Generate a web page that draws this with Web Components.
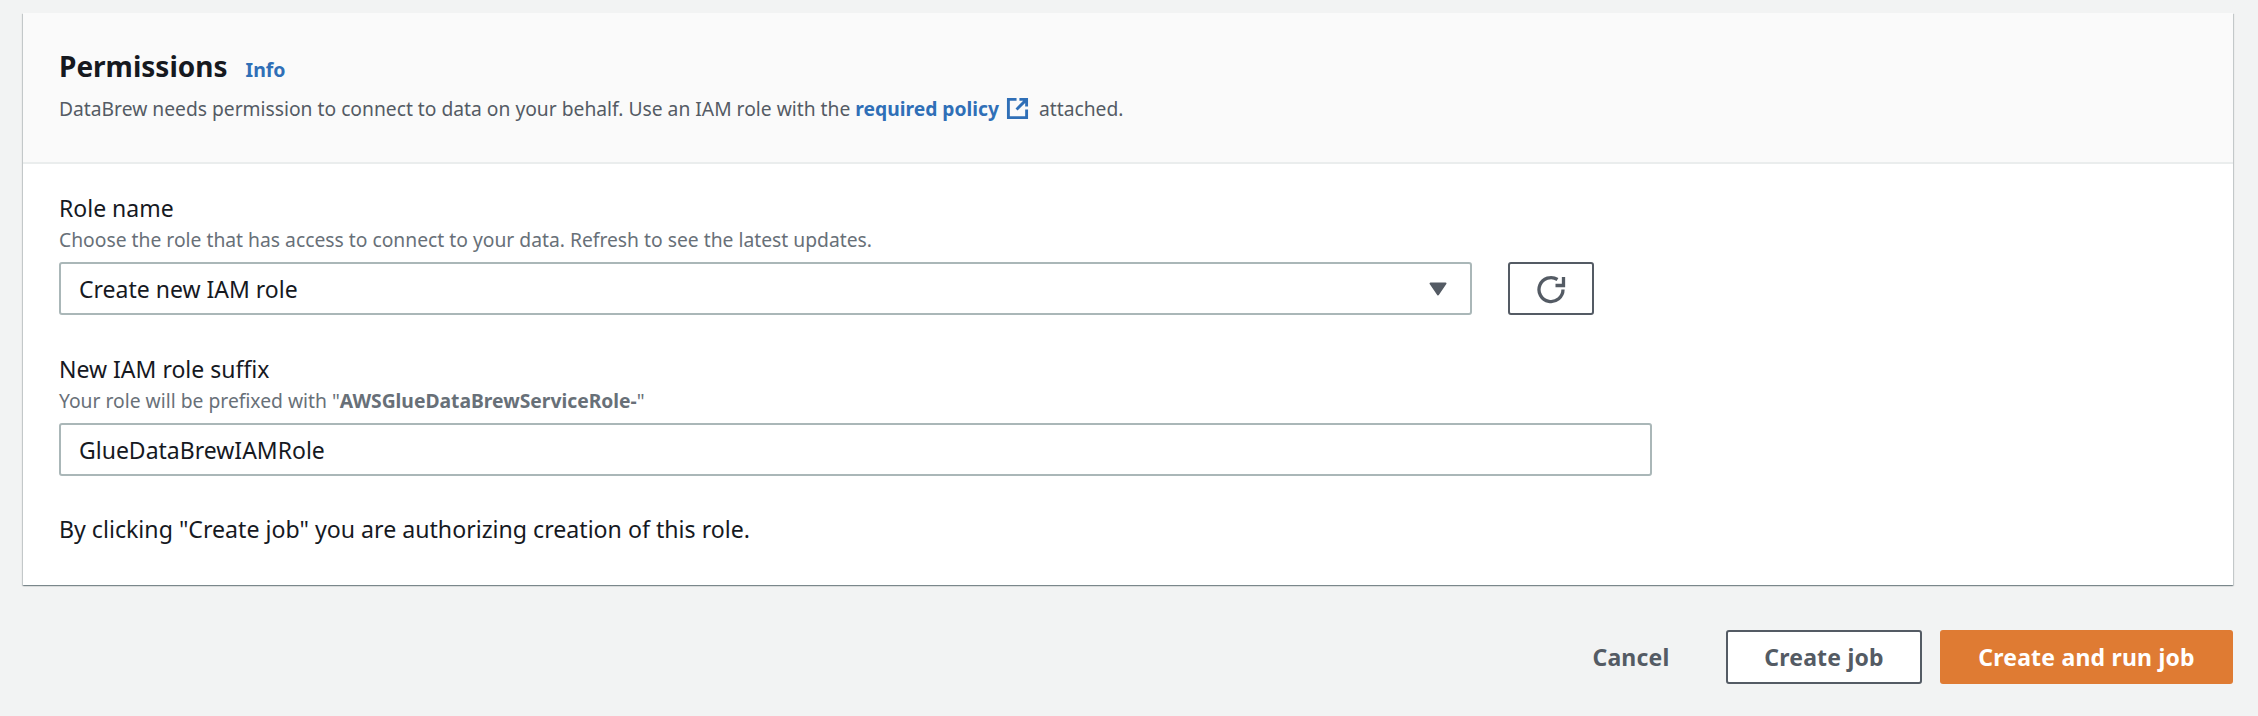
<!DOCTYPE html>
<html>
<head>
<meta charset="utf-8">
<style>
  html, body { margin: 0; background: #f2f3f3; }
  body { font-family: "Noto Sans", sans-serif; color: #16191f; }
  perm-page { display: block; }
</style>
</head>
<body>
<perm-page>
  <perm-card>
    <span slot="title">Permissions</span>
    <span slot="info">Info</span>
    <span slot="desc">DataBrew needs permission to connect to data on your behalf. Use an IAM role with the <perm-link>required policy</perm-link> attached.</span>
    <perm-field>
      <span slot="label">Role name</span>
      <span slot="help">Choose the role that has access to connect to your data. Refresh to see the latest updates.</span>
      <perm-row>
        <perm-select>Create new IAM role</perm-select>
        <perm-refresh></perm-refresh>
      </perm-row>
    </perm-field>
    <perm-field class="suffix">
      <span slot="label">New IAM role suffix</span>
      <span slot="help">Your role will be prefixed with "<b>AWSGlueDataBrewServiceRole-</b>"</span>
      <perm-input>GlueDataBrewIAMRole</perm-input>
    </perm-field>
    <perm-note>By clicking "Create job" you are authorizing creation of this role.</perm-note>
  </perm-card>
  <perm-actions>
    <perm-button kind="link">Cancel</perm-button>
    <perm-button kind="normal">Create job</perm-button>
    <perm-button kind="primary">Create and run job</perm-button>
  </perm-actions>
</perm-page>

<script>
function define(name, css, html) {
  const tpl = document.createElement('template');
  tpl.innerHTML = `<style>${css}</style>${html}`;
  customElements.define(name, class extends HTMLElement {
    connectedCallback() {
      if (this.shadowRoot) return;
      const root = this.attachShadow({ mode: 'open' });
      root.appendChild(tpl.content.cloneNode(true));
    }
  });
}

define('perm-card', `
  :host {
    display: block;
    margin: 13px 25px 0 23px;
    background: #fff;
    box-shadow: 0 1px 1px 0 rgba(0,28,36,.3), 1px 1px 1px 0 rgba(0,28,36,.15), -1px 1px 1px 0 rgba(0,28,36,.15);
  }
  header {
    height: 151px;
    box-sizing: border-box;
    padding: 31px 36px 0;
    background: #fafafa;
    border-bottom: 2px solid #eaeded;
  }
  .head { display: flex; align-items: baseline; gap: 18px; height: 44px; }
  .title { font-size: 28px; font-weight: 700; line-height: 44px; color: #16191f; }
  .info { font-size: 19.5px; font-weight: 700; color: #2f6fb7; }
  .desc { margin-top: 7px; font-size: 19.25px; line-height: 28px; color: #545b64; }
  main { padding: 29px 36px 41px; }
`, `
  <header>
    <div class="head"><span class="title"><slot name="title"></slot></span><span class="info"><slot name="info"></slot></span></div>
    <div class="desc"><slot name="desc"></slot></div>
  </header>
  <main><slot></slot></main>
`);

define('perm-link', `
  :host { display: inline; color: #2f6fb7; font-weight: 700; }
  svg { width: 23px; height: 23px; vertical-align: -4px; margin: 0 5px 0 2px; }
`, `<slot></slot> <svg viewBox="0 0 24 24" fill="none" stroke="#2f6fb7" stroke-width="3">
  <path d="M11 2.5H2.5v19h19V13"/><path d="M14 2.5h7.5V10M21 3l-10 10"/>
</svg>`);

define('perm-field', `
  :host { display: block; }
  :host(.suffix) { margin-top: 39px; }
  .label { font-size: 23px; line-height: 30px; color: #16191f; }
  .help { font-size: 19.3px; line-height: 24px; color: #687078; margin: 5px 0 10px; }
`, `
  <div class="label"><slot name="label"></slot></div>
  <div class="help"><slot name="help"></slot></div>
  <slot></slot>
`);

define('perm-row', `
  :host { display: flex; gap: 36px; }
`, `<slot></slot>`);

define('perm-select', `
  :host {
    display: flex; align-items: center; justify-content: space-between;
    box-sizing: border-box; width: 1413px; height: 53px;
    padding: 0 23px 0 18px;
    border: 2px solid #aab7b8; border-radius: 3px; background: #fff;
    font-size: 23px; color: #16191f;
  }
  svg { width: 18px; height: 14px; display: block; }
`, `<slot></slot><svg viewBox="0 0 18 14"><path d="M1.5 1.5h15L9 12.5z" fill="#545b64" stroke="#545b64" stroke-width="2" stroke-linejoin="round"/></svg>`);

define('perm-refresh', `
  :host {
    display: flex; align-items: center; justify-content: center;
    box-sizing: border-box; width: 86px; height: 53px;
    border: 2px solid #545b64; border-radius: 3px; background: #fff;
  }
  svg { width: 30px; height: 30px; display: block; }
`, `<svg viewBox="0 0 30 30" fill="none" stroke="#545b64" stroke-width="3.3">
  <path d="M27 15.5A12 12 0 1 1 21.5 5.5"/><path d="M19.5 11.5H27.5V3"/>
</svg>`);

define('perm-input', `
  :host {
    display: flex; align-items: center;
    box-sizing: border-box; width: 1593px; height: 53px;
    padding: 0 18px;
    border: 2px solid #aab7b8; border-radius: 3px; background: #fff;
    font-size: 23px; color: #16191f;
  }
`, `<slot></slot>`);

define('perm-note', `
  :host { display: block; margin-top: 38px; font-size: 23.15px; line-height: 30px; color: #16191f; }
`, `<slot></slot>`);

define('perm-actions', `
  :host { display: flex; justify-content: flex-end; align-items: center; gap: 18px; margin: 45px 25px 0 0; }
`, `<slot></slot>`);

define('perm-button', `
  :host {
    display: flex; align-items: center; justify-content: center;
    box-sizing: border-box; height: 54px; border-radius: 3px;
    font-size: 23px; font-weight: 700; letter-spacing: .2px;
  }
  :host([kind=link]) { color: #545b64; width: 154px; }
  :host([kind=normal]) { color: #545b64; background: #fff; border: 2px solid #545b64; width: 196px; }
  :host([kind=primary]) { color: #fff; background: #df7b33; width: 293px; }
`, `<slot></slot>`);
</script>
</body>
</html>
